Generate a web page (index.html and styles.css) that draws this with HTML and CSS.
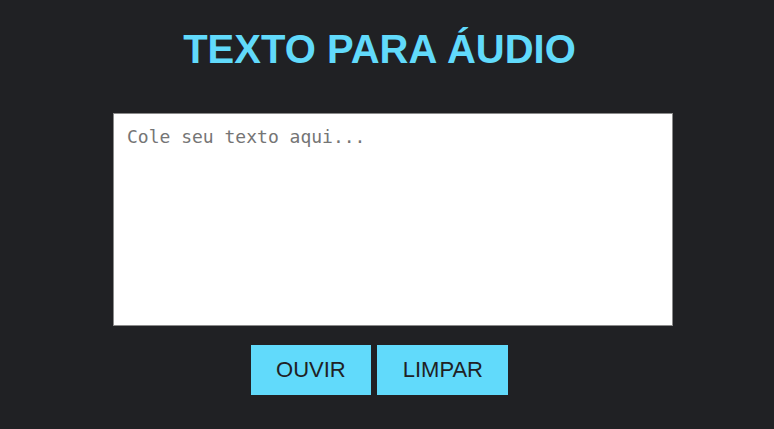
FILE: index.html
```html
<!DOCTYPE html>
<html lang="pt-BR">
<head>
<meta charset="utf-8">
<title>Texto para Áudio</title>
<link rel="stylesheet" href="styles.css">
</head>
<body>
<main class="app">
  <h1 class="title">TEXTO PARA ÁUDIO</h1>
  <textarea class="text-input" placeholder="Cole seu texto aqui..."></textarea>
  <div class="actions">
    <button class="btn">OUVIR</button>
    <button class="btn">LIMPAR</button>
  </div>
</main>
</body>
</html>
```
FILE: styles.css
```css
html, body {
  margin: 0;
  padding: 0;
  background: #202124;
  height: 100%;
}
body {
  font-family: "Liberation Sans", Arial, sans-serif;
}
.app {
  display: flex;
  flex-direction: column;
  align-items: center;
  padding-right: 15px;
}
.title {
  margin: 26px 0 0;
  font-size: 40px;
  line-height: 46px;
  font-weight: bold;
  color: #61dafb;
  text-align: center;
}
.text-input {
  display: block;
  box-sizing: border-box;
  width: 560px;
  height: 213px;
  margin: 41px 0 0 27px;
  padding: 12px 13px;
  border: 1px solid #8a8a8a;
  border-radius: 0;
  background: #ffffff;
  font-family: "DejaVu Sans Mono", monospace;
  font-size: 18px;
  line-height: 21px;
  color: #222;
  resize: none;
  outline: none;
}
.text-input::placeholder {
  color: #757575;
}
.actions {
  display: flex;
  gap: 6px;
  margin-top: 19px;
}
.btn {
  height: 50px;
  padding: 0 25.5px;
  border: none;
  border-radius: 0;
  background: #61dafb;
  color: #202124;
  font-family: "Liberation Sans", Arial, sans-serif;
  font-size: 22px;
  cursor: pointer;
}
```
